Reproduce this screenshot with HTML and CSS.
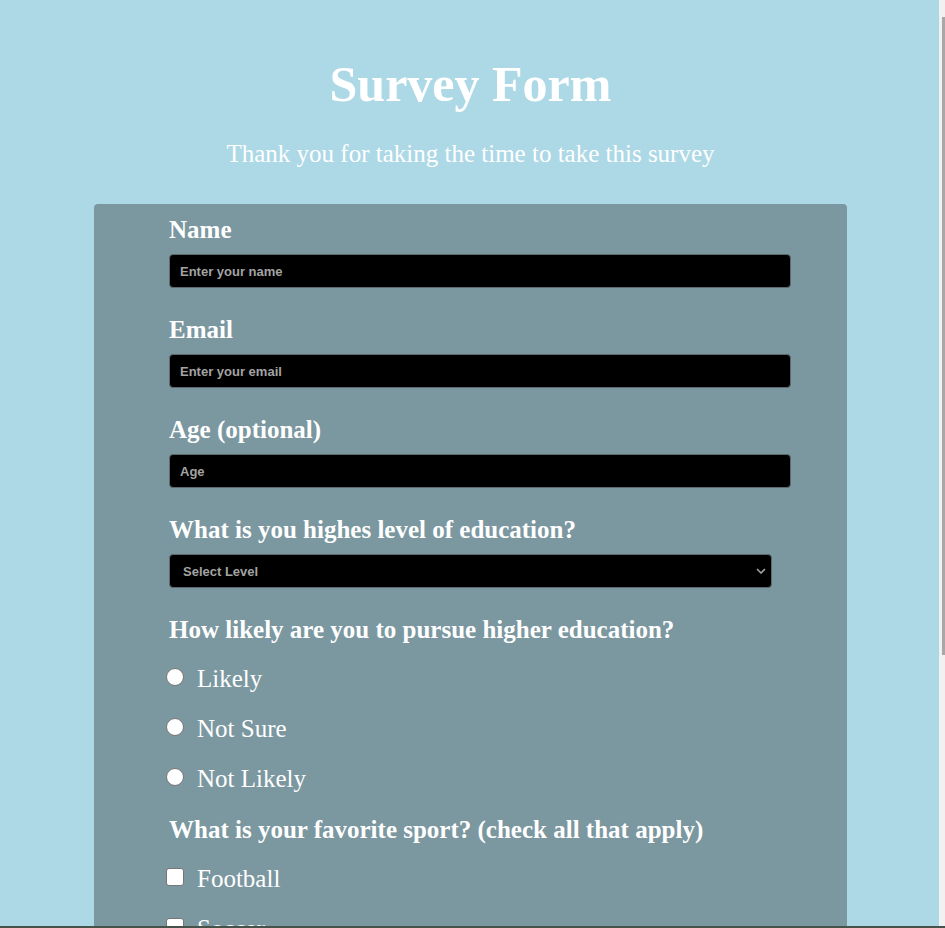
FILE: index.html
```html
<!DOCTYPE html>
<html lang="en">
<head>
<meta charset="utf-8">
<title>Survey Form</title>
<link rel="stylesheet" href="styles.css">
</head>
<body>
<div class="page">
  <header class="header">
    <h1 id="title" class="title">Survey Form</h1>
    <p id="description" class="description">Thank you for taking the time to take this survey</p>
  </header>
  <form id="survey-form" class="survey">
    <div class="field">
      <label class="field-label" for="name">Name</label>
      <input class="text-input" id="name" type="text" placeholder="Enter your name">
    </div>
    <div class="field">
      <label class="field-label" for="email">Email</label>
      <input class="text-input" id="email" type="email" placeholder="Enter your email">
    </div>
    <div class="field">
      <label class="field-label" for="number">Age (optional)</label>
      <input class="text-input" id="number" type="number" placeholder="Age">
    </div>
    <div class="field">
      <label class="field-label" for="dropdown">What is you highes level of education?</label>
      <select class="select-input" id="dropdown">
        <option>Select Level</option>
        <option>High School</option>
        <option>Bachelor</option>
        <option>Master</option>
      </select>
    </div>
    <div class="group">
      <p class="field-label">How likely are you to pursue higher education?</p>
      <label class="choice"><input class="radio" type="radio" name="likely"><span>Likely</span></label>
      <label class="choice"><input class="radio" type="radio" name="likely"><span>Not Sure</span></label>
      <label class="choice"><input class="radio" type="radio" name="likely"><span>Not Likely</span></label>
    </div>
    <div class="group">
      <p class="field-label">What is your favorite sport? (check all that apply)</p>
      <label class="choice"><input class="check" type="checkbox"><span>Football</span></label>
      <label class="choice"><input class="check" type="checkbox"><span>Soccer</span></label>
      <label class="choice"><input class="check" type="checkbox"><span>Basketball</span></label>
      <label class="choice"><input class="check" type="checkbox"><span>Tennis</span></label>
    </div>
    <div class="field">
      <label class="field-label" for="comments">Any comments or suggestions?</label>
      <textarea class="text-area" id="comments" placeholder="Enter your comment here..."></textarea>
    </div>
    <button class="submit" type="submit">Submit</button>
  </form>
</div>
<div class="scroll-track"><div class="scroll-thumb"></div></div>
<div class="bottom-line"></div>
</body>
</html>
```
FILE: styles.css
```css
html, body {
  margin: 0;
  padding: 0;
  overflow: hidden;
  height: 100%;
}
body {
  background: #add8e6;
  font-family: "Liberation Serif", "Times New Roman", serif;
  color: #ffffff;
}
.page {
  width: 941px;
}
.header {
  padding-top: 55px;
  text-align: center;
}
.title {
  margin: 0 0 27px;
  font-size: 50px;
  line-height: 58px;
  font-weight: bold;
}
.description {
  margin: 0 0 36px;
  font-size: 25px;
  line-height: 28px;
}
.survey {
  width: 753px;
  margin: 0 auto;
  box-sizing: border-box;
  padding: 12px 0 40px 76px;
  background: #7b97a0;
  border-radius: 4px;
}
.field {
  margin-bottom: 28px;
}
.field-label {
  display: block;
  margin: 0 0 11px -1px;
  font-size: 25px;
  line-height: 27px;
  font-weight: bold;
}
.text-input,
.select-input,
.text-area {
  display: block;
  box-sizing: border-box;
  height: 34px;
  width: 622px;
  margin: 0 0 0 -1px;
  padding: 0 10px;
  background: #000;
  border: 1px solid #5f6a6e;
  border-radius: 4px;
  color: #a3a3a3;
  font-family: "Liberation Sans", Arial, sans-serif;
  font-size: 13px;
  font-weight: bold;
  outline: none;
}
.text-input::placeholder,
.text-area::placeholder {
  color: #a3a3a3;
  opacity: 1;
}
.select-input {
  width: 603px;
  padding: 0 13px;
  appearance: none;
  -webkit-appearance: none;
  background: #000 url("data:image/svg+xml;utf8,<svg xmlns='http://www.w3.org/2000/svg' width='10' height='6' viewBox='0 0 10 6'><path d='M1 1l4 4 4-4' fill='none' stroke='%23a0a0a0' stroke-width='1.6'/></svg>") no-repeat right 5px center;
}
.text-area {
  height: 110px;
  padding: 10px;
  resize: none;
}
.group {
  margin-bottom: 12px;
}
.group .field-label {
  margin-bottom: 11px;
}
.choice {
  display: flex;
  align-items: center;
  height: 50px;
  font-size: 25px;
}
.radio,
.check {
  appearance: none;
  -webkit-appearance: none;
  box-sizing: border-box;
  width: 18px;
  height: 18px;
  margin: 0 13px 5px -4px;
  background: #fff;
  border: 1px solid #767676;
}
.radio {
  border-radius: 50%;
}
.check {
  border-radius: 3px;
}
.submit {
  display: block;
  width: 622px;
  height: 40px;
  margin-left: -1px;
  background: #000;
  color: #fff;
  border: none;
  border-radius: 4px;
  font-family: "Liberation Serif", serif;
  font-size: 20px;
}
.scroll-track {
  position: fixed;
  top: 0;
  right: 0;
  width: 6px;
  height: 100%;
  background: #f1f1f1;
}
.scroll-thumb {
  position: absolute;
  top: 17px;
  right: 0;
  width: 3px;
  height: 638px;
  background: #a8a8a8;
}
.bottom-line {
  position: fixed;
  left: 0;
  right: 0;
  bottom: 0;
  height: 2px;
  background: #45534a;
}
```
